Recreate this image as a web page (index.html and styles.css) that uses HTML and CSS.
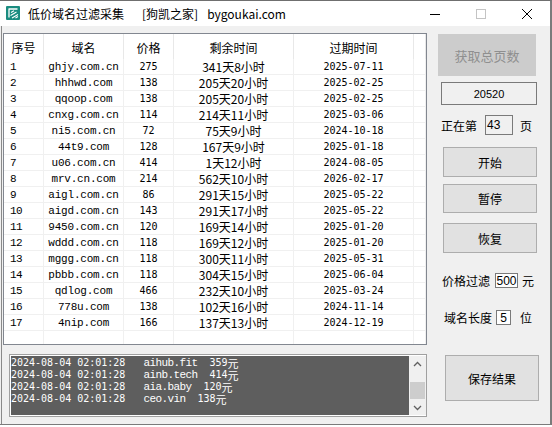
FILE: index.html
```html
<!DOCTYPE html>
<html lang="zh-CN">
<head>
<meta charset="utf-8">
<title>低价域名过滤采集</title>
<link rel="stylesheet" href="styles.css">
</head>
<body>
<div class="window">
  <div class="titlebar">
    <svg class="logo" viewBox="0 0 14 14" width="14" height="14">
      <rect x="0" y="0" width="14" height="14" rx="1" fill="#1a8c80"/>
      <path d="M2.5 3 H11.5 M3 3 V11.5" stroke="#fff" stroke-width="1.3" fill="none"/>
      <path d="M5 6.5 L8 4.8 M4.5 9.5 L10.5 6 M6 12 L12 8.5 M9.5 12 L12 10.5" stroke="#fff" stroke-width="1.1" fill="none"/>
    </svg>
    <span class="title">低价域名过滤采集</span>
    <span class="title-site">[狗凯之家]</span>
    <span class="title-url">bygoukai.com</span>
    <div class="controls">
      <div class="ctl"><svg width="10" height="10" viewBox="0 0 10 10"><path d="M0 5.5 H10" stroke="#000" stroke-width="1"/></svg></div>
      <div class="ctl"><svg width="10" height="10" viewBox="0 0 10 10"><rect x="0.5" y="0.5" width="9" height="9" stroke="#c4c4c4" fill="none"/></svg></div>
      <div class="ctl"><svg width="10" height="10" viewBox="0 0 10 10"><path d="M0 0 L10 10 M10 0 L0 10" stroke="#000" stroke-width="1"/></svg></div>
    </div>
  </div>
  <div class="main">
    <div class="leftcol">
      <div class="listview">
        <div class="row head">
          <div class="c">序号</div><div class="c">域名</div><div class="c">价格</div><div class="c">剩余时间</div><div class="c">过期时间</div><div class="c"></div>
        </div>
        <div class="row"><div class="c n">1</div><div class="c d">ghjy.com.cn</div><div class="c p">275</div><div class="c r">341天8小时</div><div class="c e">2025-07-11</div><div class="c"></div></div>
        <div class="row"><div class="c n">2</div><div class="c d">hhhwd.com</div><div class="c p">138</div><div class="c r">205天20小时</div><div class="c e">2025-02-25</div><div class="c"></div></div>
        <div class="row"><div class="c n">3</div><div class="c d">qqoop.com</div><div class="c p">138</div><div class="c r">205天20小时</div><div class="c e">2025-02-25</div><div class="c"></div></div>
        <div class="row"><div class="c n">4</div><div class="c d">cnxg.com.cn</div><div class="c p">114</div><div class="c r">214天11小时</div><div class="c e">2025-03-06</div><div class="c"></div></div>
        <div class="row"><div class="c n">5</div><div class="c d">ni5.com.cn</div><div class="c p">72</div><div class="c r">75天9小时</div><div class="c e">2024-10-18</div><div class="c"></div></div>
        <div class="row"><div class="c n">6</div><div class="c d">44t9.com</div><div class="c p">128</div><div class="c r">167天9小时</div><div class="c e">2025-01-18</div><div class="c"></div></div>
        <div class="row"><div class="c n">7</div><div class="c d">u06.com.cn</div><div class="c p">414</div><div class="c r">1天12小时</div><div class="c e">2024-08-05</div><div class="c"></div></div>
        <div class="row"><div class="c n">8</div><div class="c d">mrv.cn.com</div><div class="c p">214</div><div class="c r">562天10小时</div><div class="c e">2026-02-17</div><div class="c"></div></div>
        <div class="row"><div class="c n">9</div><div class="c d">aigl.com.cn</div><div class="c p">86</div><div class="c r">291天15小时</div><div class="c e">2025-05-22</div><div class="c"></div></div>
        <div class="row"><div class="c n">10</div><div class="c d">aigd.com.cn</div><div class="c p">143</div><div class="c r">291天17小时</div><div class="c e">2025-05-22</div><div class="c"></div></div>
        <div class="row"><div class="c n">11</div><div class="c d">9450.com.cn</div><div class="c p">120</div><div class="c r">169天14小时</div><div class="c e">2025-01-20</div><div class="c"></div></div>
        <div class="row"><div class="c n">12</div><div class="c d">wddd.com.cn</div><div class="c p">118</div><div class="c r">169天12小时</div><div class="c e">2025-01-20</div><div class="c"></div></div>
        <div class="row"><div class="c n">13</div><div class="c d">mggg.com.cn</div><div class="c p">118</div><div class="c r">300天11小时</div><div class="c e">2025-05-31</div><div class="c"></div></div>
        <div class="row"><div class="c n">14</div><div class="c d">pbbb.com.cn</div><div class="c p">118</div><div class="c r">304天15小时</div><div class="c e">2025-06-04</div><div class="c"></div></div>
        <div class="row"><div class="c n">15</div><div class="c d">qdlog.com</div><div class="c p">466</div><div class="c r">232天10小时</div><div class="c e">2025-03-24</div><div class="c"></div></div>
        <div class="row"><div class="c n">16</div><div class="c d">778u.com</div><div class="c p">138</div><div class="c r">102天16小时</div><div class="c e">2024-11-14</div><div class="c"></div></div>
        <div class="row"><div class="c n">17</div><div class="c d">4nip.com</div><div class="c p">166</div><div class="c r">137天13小时</div><div class="c e">2024-12-19</div><div class="c"></div></div>
        <div class="row"><div class="c"></div><div class="c"></div><div class="c"></div><div class="c"></div><div class="c"></div><div class="c"></div></div>
      </div>
      <div class="log">
        <div class="log-inner">
          <div class="log-text">
            <div class="ln"><span class="t">2024-08-04 02:01:28   </span><span class="dm">aihub.fit</span><span class="t">  359</span><span class="y">元</span></div>
            <div class="ln"><span class="t">2024-08-04 02:01:28   </span><span class="dm">ainb.tech</span><span class="t">  414</span><span class="y">元</span></div>
            <div class="ln"><span class="t">2024-08-04 02:01:28   </span><span class="dm">aia.baby</span><span class="t">  120</span><span class="y">元</span></div>
            <div class="ln"><span class="t">2024-08-04 02:01:28   </span><span class="dm">ceo.vin</span><span class="t">  138</span><span class="y">元</span></div>
          </div>
          <div class="scrollbar">
            <svg class="arrow" width="17" height="17" viewBox="0 0 17 17"><path d="M5 10 L8.5 6.5 L12 10" stroke="#606060" stroke-width="1.3" fill="none"/></svg>
            <div class="track"><div class="thumb"></div></div>
            <svg class="arrow" width="17" height="17" viewBox="0 0 17 17"><path d="M5 7 L8.5 10.5 L12 7" stroke="#606060" stroke-width="1.3" fill="none"/></svg>
          </div>
        </div>
      </div>
    </div>
    <div class="panel">
      <div class="btn disabled fetch">获取总页数</div>
      <div class="total">20520</div>
      <div class="line page-line"><span>正在第</span><span class="box ro page-box">43</span><span>页</span></div>
      <div class="btn start">开始</div>
      <div class="btn pause">暂停</div>
      <div class="btn resume">恢复</div>
      <div class="line price-line"><span>价格过滤</span><span class="box price-box">500</span><span>元</span></div>
      <div class="line len-line"><span>域名长度</span><span class="box len-box">5</span><span>位</span></div>
      <div class="btn save">保存结果</div>
    </div>
  </div>
</div>
</body>
</html>
```

FILE: styles.css
```css
* { box-sizing: border-box; margin: 0; padding: 0; }
html, body { width: 552px; height: 427px; overflow: hidden; background: #ffffff; }
body {
  font-family: "Noto Sans CJK SC", "Microsoft YaHei", sans-serif;
  font-size: 12px;
  color: #000;
}
.window {
  width: 552px;
  height: 425px;
  display: flex;
  flex-direction: column;
  border-top: 1px solid #6f6f6f;
  border-right: 2px solid #7b7b7b;
  border-bottom: 1px solid #7b7b7b;
  background: #f0f0f0;
}
.titlebar {
  height: 25px;
  flex: none;
  background: #fff;
  display: flex;
  align-items: center;
  padding-left: 6px;
}
.logo { flex: none; margin-right: 8px; margin-top: -1px; }
.title { line-height: 16px; }
.title-site { margin-left: 18px; }
.title-url { margin-left: 9px; }
.controls { margin-left: auto; display: flex; height: 25px; }
.ctl { width: 46px; height: 25px; display: flex; align-items: center; justify-content: center; }

.main {
  flex: 1;
  display: flex;
  border-left: 1px solid #8a8a8a;
  margin-left: 1px;
}
.leftcol { width: 426px; flex: none; padding-left: 1px; }
.listview {
  margin-top: 7px;
  width: 424px;
  height: 312px;
  border: 1px solid #828790;
  background: #fff;
  overflow: hidden;
}
.row {
  display: grid;
  grid-template-columns: 40px 80px 50px 120px 120px 1fr;
  height: 16px;
}
.row .c {
  border-right: 1px solid #f0f0f0;
  border-bottom: 1px solid #f0f0f0;
  height: 16px;
  display: flex;
  align-items: center;
  justify-content: center;
  white-space: nowrap;
  overflow: hidden;
}
.row.head { height: 25px; }
.row.head .c {
  height: 25px;
  border-bottom: none;
  border-right: 1px solid #e8e8e8;
  font-size: 12px;
  padding-top: 1px;
}
.row .n { justify-content: flex-start; padding-left: 6px; font-family: "Liberation Mono", monospace; font-size: 11px; letter-spacing: -0.6px; }
.row .d { font-family: "Liberation Mono", monospace; font-size: 11px; letter-spacing: -0.2px; }
.row .p { font-family: "DejaVu Sans Mono", monospace; font-size: 10px; }
.row .r { font-size: 12px; }
.row .e { font-family: "DejaVu Sans Mono", monospace; font-size: 10px; }

.log {
  margin: 9px 0 0 6px;
  width: 418px;
  height: 63px;
  border: 1px solid #a0a0a0;
  background: #5e5e5e;
}
.log-inner {
  height: 100%;
  display: flex;
  border-top: 1px solid #ffffff;
  border-left: 1px solid #ffffff;
  border-bottom: 1px solid #ffffff;
}
.log-text { flex: 1; color: #fff; padding-top: 1px; }
.ln { height: 12px; line-height: 12px; display: flex; align-items: center; white-space: pre; }
.ln .t { font-family: "DejaVu Sans Mono", monospace; font-size: 10px; line-height: 12px; }
.ln .dm { font-family: "Liberation Mono", monospace; font-size: 11px; letter-spacing: -0.6px; line-height: 12px; }
.ln .y { font-size: 11px; line-height: 12px; }
.scrollbar {
  width: 17px;
  flex: none;
  background: #f0f0f0;
  display: flex;
  flex-direction: column;
}
.arrow { flex: none; display: block; }
.track { flex: 1; }
.thumb { margin-top: 9px; width: 15px; margin-left: 1px; height: 17px; background: #cdcdcd; }

.panel { flex: 1; display: flex; flex-direction: column; align-items: flex-start; }
.btn {
  display: flex;
  align-items: center;
  justify-content: center;
  background: #e1e1e1;
  border: 1px solid #adadad;
  font-size: 12px;
}
.btn.disabled { background: #cccccc; border-color: #cccccc; color: #8f8f8f; }
.fetch { margin: 8px 0 0 10px; width: 98px; height: 42px; font-size: 13px; }
.total {
  margin: 6px 0 0 13px;
  width: 96px;
  height: 23px;
  border: 1px solid #7a7a7a;
  display: flex;
  align-items: center;
  justify-content: center;
  font-family: "Liberation Sans", sans-serif;
  font-size: 11px;
}
.line { display: flex; align-items: center; }
.box {
  height: 100%;
  border: 1px solid #7a7a7a;
  background: #fff;
  font-family: "Liberation Sans", sans-serif;
  font-size: 12px;
  display: flex;
  align-items: center;
}
.box.ro { background: #f0f0f0; }
.page-line { margin: 10px 0 0 13px; height: 20px; }
.page-box { width: 28px; margin: 0 7px 0 8px; padding-left: 1px; }
.start { margin: 12px 0 0 15px; width: 94px; height: 30px; }
.pause { margin: 7px 0 0 15px; width: 94px; height: 29px; }
.resume { margin: 10px 0 0 15px; width: 94px; height: 30px; }
.price-line { margin: 20px 0 0 14px; height: 15px; }
.price-box { width: 23px; margin: 0 4px 0 5px; justify-content: center; }
.len-line { margin: 22px 0 0 16px; height: 15px; }
.len-box { width: 15px; margin: 0 9px 0 4px; justify-content: center; }
.save { margin: 30px 0 0 17px; width: 94px; height: 46px; }
```
